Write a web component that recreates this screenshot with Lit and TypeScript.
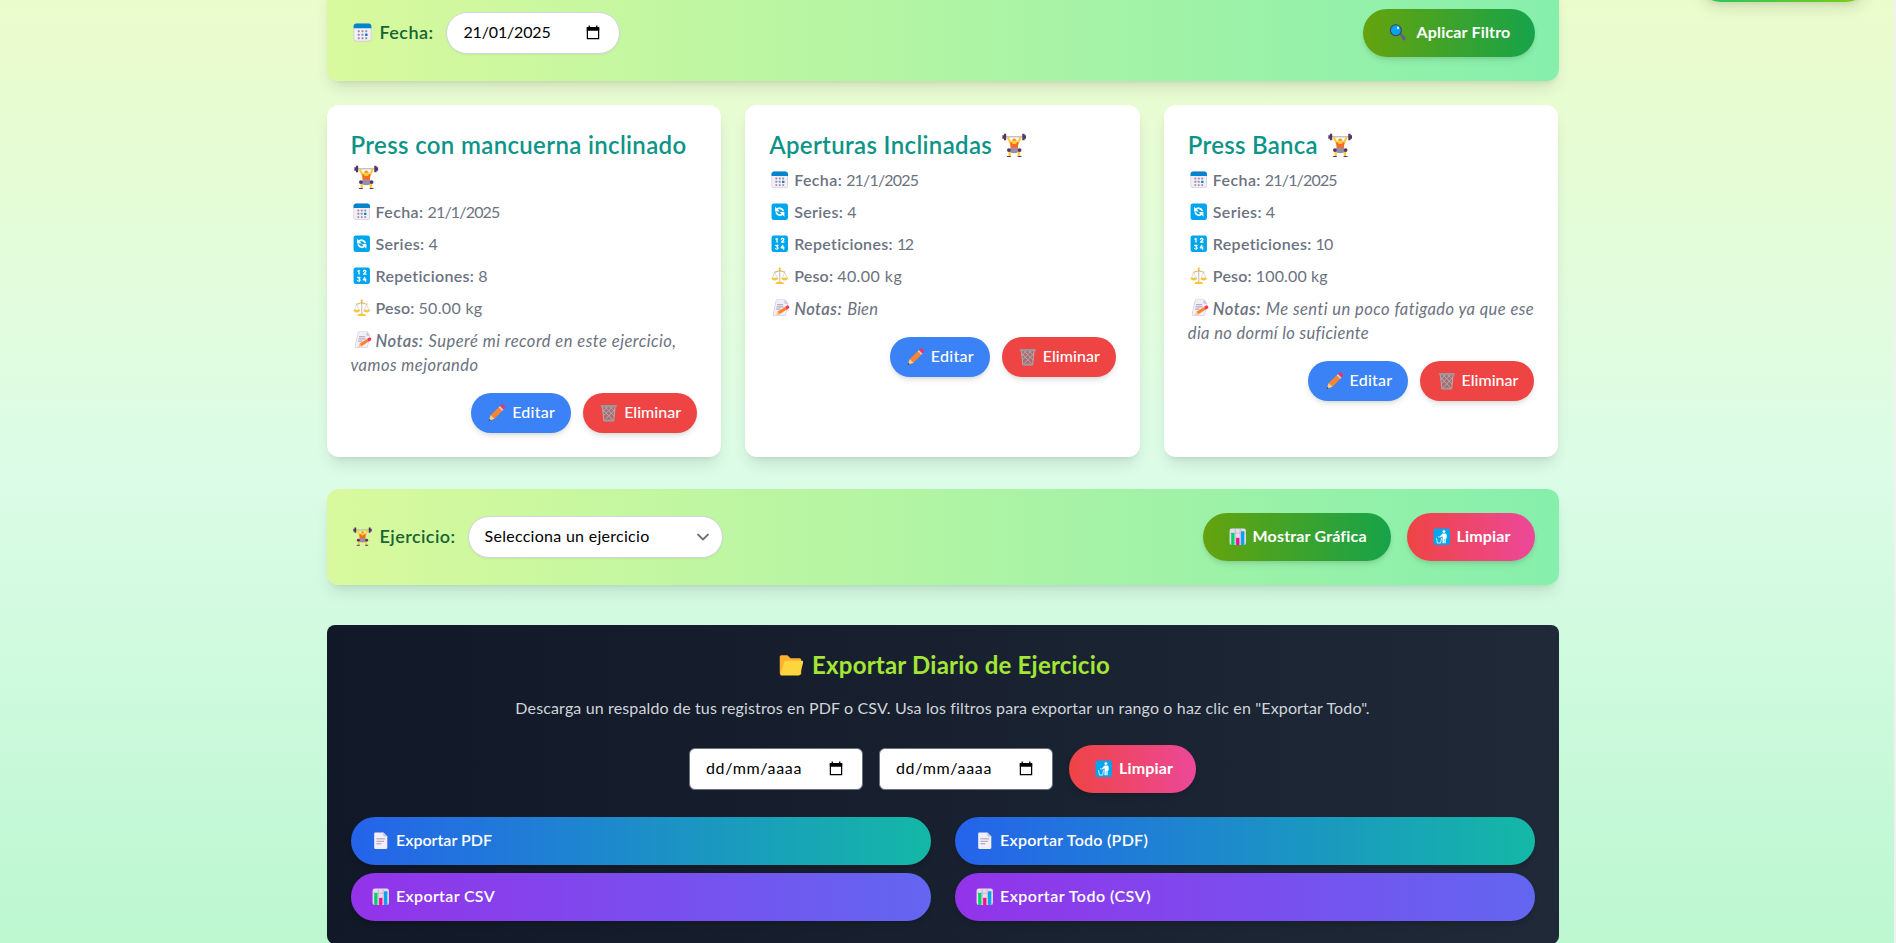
import { LitElement, html, css, svg } from "lit";
import { customElement, property } from "lit/decorators.js";
import { styleMap } from "lit/directives/style-map.js";

/* Inline text whose tracking is adjusted so that it spans a given width. */
@customElement("fit-text")
class FitText extends LitElement {
  @property({ type: Number }) w = 0;
  @property() text = "";
  @property({ attribute: false }) tracking = 0;
  static styles = css`
    :host { display: inline; white-space: pre; }
  `;
  firstUpdated() {
    const span = this.renderRoot.querySelector("span")!;
    const natural = span.getBoundingClientRect().width;
    if (this.w && natural) {
      this.tracking = (this.w - natural) / this.text.length;
      this.requestUpdate();
    }
  }
  render() {
    return html`<span style=${styleMap({ letterSpacing: this.tracking + "px" })}>${this.text}</span>`;
  }
}

const t = (text: string, w = 0) => html`<fit-text .text=${text} .w=${w}></fit-text>`;

const glyphs: Record<string, unknown> = {
  calendar: svg`
    <rect x="1" y="1" width="30" height="30" rx="5" fill="#CDC4D6"/>
    <rect x="2" y="2" width="28" height="28" rx="4" fill="#F3EEF8"/>
    <path d="M1 9V6a5 5 0 0 1 5-5h20a5 5 0 0 1 5 5v3z" fill="#0084CE"/>
    <g fill="#998EA4"><rect x="8" y="12" width="3.4" height="3.4" rx=".8"/><rect x="14.3" y="12" width="3.4" height="3.4" rx=".8"/><rect x="20.6" y="12" width="3.4" height="3.4" rx=".8"/><rect x="8" y="18" width="3.4" height="3.4" rx=".8"/><rect x="14.3" y="18" width="3.4" height="3.4" rx=".8"/><rect x="8" y="24" width="3.4" height="3.4" rx=".8"/><rect x="14.3" y="24" width="3.4" height="3.4" rx=".8"/><rect x="20.6" y="24" width="3.4" height="3.4" rx=".8"/></g>
    <rect x="20.2" y="17.6" width="4.4" height="4.4" rx=".8" fill="#0084CE"/>`,
  series: svg`
    <rect x="1" y="1" width="30" height="30" rx="4" fill="#00A6ED"/>
    <g fill="none" stroke="#fff" stroke-width="3.2"><path d="M10.5 12.2c3-4 9.500-3.600 12.300 2.500"/><path d="M21.500 19.800c-3 4-9.500 3.600-12.300-2.500"/></g>
    <path d="M7.500 7v8.500H16zM24.500 25v-8.500H16z" fill="#fff"/>`,
  reps: svg`
    <rect x="1" y="1" width="30" height="30" rx="4" fill="#00A6ED"/>
    <g fill="none" stroke="#fff" stroke-width="2.300" stroke-linecap="round" stroke-linejoin="round"><path d="M9 7.500l2-1.200V13"/><path d="M19 7.800c1-2.400 5-1.800 4.500.8-.3 1.500-3 2.700-4.300 4.400h4.700"/><path d="M8.500 19h4.300l-2.300 2.700c3 0 3.200 4-.1 4-1 0-1.800-.4-2.200-1"/><path d="M21.500 19l-2.800 4.400h5M23 21.500V26"/></g>`,
  scale: svg`
    <path d="M15 4h2v23h-2z" fill="#BEBEBE"/><path d="M6 9.500c5-.2 6-2.500 10-2.500s5 2.300 10 2.500" fill="none" stroke="#CFA53A" stroke-width="1.800"/>
    <path d="M7 10L2.500 20M7 10l4.500 10M25 10l-4.500 10M25 10l4.500 10" stroke="#BEBEBE" stroke-width="1" fill="none"/>
    <path d="M1 19.500h12c0 3.500-2.500 5-6 5s-6-1.500-6-5zM19 19.500h12c0 3.500-2.500 5-6 5s-6-1.500-6-5zM8 31c0-2.500 3-4.500 8-4.500s8 2 8 4.500z" fill="#FCC43B"/>
    <circle cx="16" cy="3" r="2" fill="#FCB62B"/>`,
  memo: svg`
    <path d="M4 3a2 2 0 0 1 2-2h15l7 7v21a2 2 0 0 1-2 2H6a2 2 0 0 1-2-2z" fill="#CDC4D6"/>
    <path d="M5 3a1 1 0 0 1 1-1h14.500l6.500 6.500V29a1 1 0 0 1-1 1H6a1 1 0 0 1-1-1z" fill="#F3EEF8"/>
    <path d="M20.500 2v5a1.500 1.500 0 0 0 1.500 1.500h5z" fill="#CDC4D6"/>
    <path d="M8 10.500h11M8 14.500h13M8 18.500h8" stroke="#998EA4" stroke-width="1.500"/>
    <path d="M12 23L25 13.500l4 5L16 28l-5 1z" fill="#FF822D"/><path d="M12 23l-2 7 6-2z" fill="#FFCE7C"/><path d="M24 14.300l3-2.300c2-1.400 6 3 3.600 5.200l-2.700 2z" fill="#F92F60"/>`,
  lifter: svg`
    <path d="M3 5h26" stroke="#998EA4" stroke-width="1.100"/>
    <path d="M8 6.500l4 8 M24 6.500l-4 8" stroke="#FFC83D" stroke-width="3" stroke-linecap="round"/>
    <path d="M2.500 1h3v8.500h-3zM26.500 1h3v8.500h-3zM.5 3h2v4.500h-2zM29.500 3h2v4.500h-2z" fill="#533566"/>
    <path d="M10.500 12.500c3.500-1.500 7.500-1.500 11 0l-1 9.500h-9z" fill="#FF6A1F"/><circle cx="16" cy="11" r="3.400" fill="#FFC83D"/><path d="M13.500 8.500a3.500 3.500 0 0 1 5 0l-1 1.500h-3z" fill="#E59B2C"/>
    <path d="M10 23.500V30M22 23.500V30" stroke="#FFC83D" stroke-width="3"/>
    <ellipse cx="16" cy="22.500" rx="6" ry="3.800" fill="#998EA4"/><circle cx="9" cy="22.300" r="2.500" fill="#533566"/><circle cx="23" cy="22.300" r="2.500" fill="#533566"/>
    <path d="M7 30h4.500v1.500H6zM20.500 30H25l1 1.500h-5.500z" fill="#533566"/>`,
  pencil: svg`
    <path d="M5 20L21 4.500l6.500 6.500L12 27z" fill="#FF822D"/><path d="M5 20l-3 8.500L3.500 30 12 27z" fill="#FFCE7C"/><path d="M2.500 27L1.500 30.500 5 29.500z" fill="#402A32"/>
    <path d="M19.500 6l2.500-2.500 6.500 6.500-2.500 2.500z" fill="#D3D3D3"/><path d="M22 3.500l1.500-1.500c2-2 4.500-.8 6 .7s2.300 3.800.6 5.500L28.500 10z" fill="#F92F60"/>`,
  trash: svg`
    <path d="M4 5h24l-3 26H7z" fill="#83838a" fill-opacity=".65"/>
    <path d="M5 10l19 20M9 5l17 17M18 5l9 9M27 10L8 30M23 5L6 22M14 5l-9 9M4.500 5L7 31h18l2.500-26" fill="none" stroke="#AFAFB2" stroke-width="1.800"/>
    <path d="M1.500 2h29v4h-29z" fill="#9A9A9E"/><path d="M7 28.500h18V31H7z" fill="#9A9A9E"/>`,
  chart: svg`
    <rect x="1" y="1" width="30" height="30" rx="4" fill="#E6DAF0"/><path d="M2 9.500h28M11.500 1v30M20.500 1v30" stroke="#B4ACBC" stroke-width="1.200"/>
    <path d="M4 9h6v22H4z" fill="#00D26A"/><path d="M13 18h6v13h-6z" fill="#F70A8D"/><path d="M22 6h6v25h-6z" fill="#00A6ED"/>`,
  litter: svg`
    <rect x="1" y="1" width="30" height="30" rx="4" fill="#00A6ED"/><circle cx="20" cy="6.500" r="2.600" fill="#fff"/>
    <path d="M17.500 10h4.500c2 0 3 1.200 3 3v6h-1.800v9h-2.400v-8h-1v8h-2.400V15l-5 3-1-1.600z" fill="#fff"/>
    <path d="M6.500 18.500L8 27.500h6l1.500-9M9 15.500l2 1" fill="none" stroke="#fff" stroke-width="1.500"/>`,
  folder: svg`
    <path d="M1 5a2 2 0 0 1 2-2h8l4 4h12a2 2 0 0 1 2 2v19H3a2 2 0 0 1-2-2z" fill="#FFB02E"/><path d="M9 10h20.500a2 2 0 0 1 2 2.600L27.500 28a2 2 0 0 1-2 1.500H3.500c-1.500 0-2-.8-1.600-2L7 11.500A2 2 0 0 1 9 10z" fill="#FCD53F"/>`,
  page: svg`
    <path d="M4 3a2 2 0 0 1 2-2h15l7 7v21a2 2 0 0 1-2 2H6a2 2 0 0 1-2-2z" fill="#F3EEF8"/><path d="M20.500 1v5.500A1.500 1.500 0 0 0 22 8h6z" fill="#CDC4D6"/>
    <path d="M8 12.500h16M8 17h14M8 21.500h9" stroke="#998EA4" stroke-width="1.500"/>`,
  search: svg`
    <path d="M19 18l3-2 7.500 8.500a3 3 0 0 1-4.500 4.500z" fill="#635994"/><circle cx="12.500" cy="11.500" r="11" fill="#533566"/><circle cx="12.500" cy="11.500" r="9" fill="#00A6ED"/><ellipse cx="16.500" cy="7" rx="2" ry="2.600" fill="#fff"/>`,
};

/* Emoji-style pictogram drawn in a fixed advance box. */
const icon = (name: string, cls = "") => html`<span class="emoji ${cls}"><svg viewBox="0 0 32 32">${glyphs[name]}</svg></span>`;

const dateIcon = html`<svg class="pick" viewBox="0 0 14 16"><path d="M1 3h12v11.500H1z" fill="none" stroke="#000" stroke-width="1.300"/><path d="M.4 2h13.200v4H.4zM2.300.5h1.400V3H2.300zM10.300.5h1.400V3h-1.400z"/></svg>`;

interface Entry { title: string; tw: number; wrap?: boolean; date: string; sets: string; reps: string; rw: number; weight: string; ww: number; notes: [string, number][]; }

const entries: Entry[] = [
  { title: "Press con mancuerna inclinado", tw: 336, wrap: true, date: "21/1/2025", sets: "4", reps: "8", rw: 10, weight: "50.00 kg", ww: 64, notes: [["Superé mi record en este ejercicio,", 248], ["vamos mejorando", 128]] },
  { title: "Aperturas Inclinadas", tw: 223, date: "21/1/2025", sets: "4", reps: "12", rw: 16, weight: "40.00 kg", ww: 65, notes: [["Bien", 31]] },
  { title: "Press Banca", tw: 130, date: "21/1/2025", sets: "4", reps: "10", rw: 17, weight: "100.00 kg", ww: 72, notes: [["Me senti un poco fatigado ya que ese", 268], ["dia no dormí lo suficiente", 181]] },
];

@customElement("app-root")
class AppRoot extends LitElement {
  static styles = css`
    :host { display: block; height: 943px; overflow: hidden; position: relative; font-family: Lato, "Open Sans", sans-serif; font-size: 16px; line-height: 24px;
      border-right: 2px solid #f1f1f1; box-sizing: border-box;
      background: linear-gradient(to bottom, #ecfccb -2%, #dcfce7 50%, #bbf7d0 101%); }
    * { box-sizing: border-box; }
    .page { width: 1232px; margin-left: 326.5px; display: flex; flex-direction: column; }
    .emoji { display: inline-flex; width: 22px; height: 16px; justify-content: center; align-items: center; vertical-align: -2px; flex: none; }
    .emoji svg { width: 17.500px; height: 17.500px; flex: none; }
    .emoji.m { width: 24px; height: 18px; } .emoji.m svg { width: 19px; height: 19px; }
    .emoji.l { width: 32px; height: 24px; vertical-align: -3px; } .emoji.l svg { width: 24.500px; height: 24.500px; }
    .emoji.it { transform: skewX(-12deg); margin-left: 1px; margin-right: -1px; }
    .panel { height: 96px; padding: 0 24px; display: flex; align-items: center; border-radius: 12px; background: linear-gradient(to right, #d9f99d, #86efac); box-shadow: 0 10px 15px -3px rgba(0,0,0,.1), 0 4px 6px -4px rgba(0,0,0,.1); }
    .panel.top { margin-top: -15px; }
    .lbl { display: flex; align-items: center; gap: 5px; font-size: 18px; font-weight: 600; color: #166534; }
    .lbl .emoji { margin-top: -1px; }
    .pill > fit-text, .btn > fit-text, .field > fit-text, .lbl > fit-text { margin-top: -2px; }
    .field { display: flex; align-items: center; justify-content: space-between; height: 42px; padding: 0 19px 0 17px; width: 174px; background: #fff; border: 1px solid #d1d5db; border-radius: 21px; box-shadow: 0 1px 2px rgba(0,0,0,.05); margin-left: 12px; color: #000; }
    .field.select { width: 255px; padding-right: 12px; padding-left: 16px; }
    .field.sq { border-color: #6b7280; border-radius: 6px; margin: 0; box-shadow: none; padding-left: 16px; }
    .pick { width: 14px; height: 15px; margin-top: -1px; }
    .chev { width: 14px; height: 10px; }
    .sp { flex: 1; }
    .pill { display: flex; align-items: center; gap: 4px; height: 48px; border-radius: 24px; padding: 0 24px; color: #fff; font-weight: 700; box-shadow: 0 4px 6px -1px rgba(0,0,0,.1), 0 2px 4px -2px rgba(0,0,0,.1); }
    .green { background: linear-gradient(to right, #65a30d, #16a34a); width: 188px; }
    .green.filter { width: 172px; gap: 8px; }
    .red { background: linear-gradient(to right, #ef4444, #ec4899); width: 128px; margin-left: 16px; }
    .cards { display: grid; grid-template-columns: repeat(3, 1fr); gap: 24px; margin: 24px 0 32px; }
    .card { height: 352px; background: #fff; border-radius: 12px; padding: 24px; box-shadow: 0 10px 15px -3px rgba(0,0,0,.1), 0 4px 6px -4px rgba(0,0,0,.1); color: #6b7280; display: flex; flex-direction: column; }
    .title { font-size: 24px; line-height: 32px; font-weight: 600; color: #0d9488; margin-bottom: 8px; white-space: nowrap; }
    .title .emoji.tail { margin-left: 6px; }
    .row { margin-bottom: 8px; height: 24px; display: flex; align-items: center; padding-bottom: 2px; }
    .row b { font-weight: 600; margin: 0 4px 0 3px; }
    .note { font-style: italic; font-size: 16.500px; white-space: nowrap; }
    .note b { font-weight: 600; margin: 0 5px 0 3px; }
    .acts { display: flex; justify-content: flex-end; gap: 12px; margin-top: 16px; }
    .btn { display: flex; align-items: center; gap: 4px; height: 40px; border-radius: 20px; padding: 0 15px; color: #fff; font-weight: 500; box-shadow: 0 4px 6px -1px rgba(0,0,0,.1), 0 2px 4px -2px rgba(0,0,0,.1); }
    .edit { background: #3b82f6; width: 100px; } .del { background: #ef4444; width: 114px; }
    .export { margin-top: 40px; height: 319px; border-radius: 8px; background: linear-gradient(to right, #111827, #1f2937); padding: 24px; }
    .h { display: flex; justify-content: center; align-items: center; gap: 5px; font-size: 24px; line-height: 32px; font-weight: 700; color: #a3e635; }
    .desc { text-align: center; color: #d1d5db; margin: 15px 0 25px; }
    .range { display: flex; justify-content: center; align-items: center; gap: 16px; margin-bottom: 24px; }
    .range .red { margin: 0; width: 127px; }
    .grid { display: grid; grid-template-columns: 1fr 1fr; column-gap: 24px; row-gap: 8px; }
    .grid .pill { padding: 0 19.500px; font-weight: 600; }
    .pdf { background: linear-gradient(to right, #2563eb, #14b8a6); }
    .csv { background: linear-gradient(to right, #9333ea, #6366f1); }
    .float { position: absolute; right: 24px; top: -46px; width: 173px; height: 48px; border-radius: 24px; background: linear-gradient(to right, #22c55e, #84cc16); box-shadow: 0 10px 15px -3px rgba(0,0,0,.1), 0 4px 6px -4px rgba(0,0,0,.1); }
  `;

  card(e: Entry) {
    return html`<article class="card">
      <div class="title">${t(e.title, e.tw)}${e.wrap ? html`<br />${icon("lifter", "l")}` : icon("lifter", "l tail")}</div>
      <div class="row">${icon("calendar")}<b>${t("Fecha:", 48)}</b>${t(e.date, 72)}</div>
      <div class="row">${icon("series")}<b>${t("Series:", 49)}</b>${t(e.sets, 10)}</div>
      <div class="row">${icon("reps")}<b>${t("Repeticiones:", 99)}</b>${t(e.reps, e.rw)}</div>
      <div class="row">${icon("scale")}<b>${t("Peso:", 39)}</b>${t(e.weight, e.ww)}</div>
      <div class="note">${icon("memo", "it")}<b>${t("Notas:", 48)}</b>${e.notes.map(([s, w], i) => html`${i ? html`<br />` : ""}${t(s, w)}`)}</div>
      <div class="acts">
        <div class="btn edit">${icon("pencil")}${t("Editar", 43)}</div>
        <div class="btn del">${icon("trash")}${t("Eliminar", 57)}</div>
      </div>
    </article>`;
  }

  render() {
    return html`
      <div class="page">
        <section class="panel top">
          <div class="lbl">${icon("calendar", "m")}${t("Fecha:", 54)}</div>
          <div class="field">${t("21/01/2025", 87)}${dateIcon}</div>
          <span class="sp"></span>
          <div class="pill green filter">${icon("search")}${t("Aplicar Filtro", 94)}</div>
        </section>
        <section class="cards">${entries.map((e) => this.card(e))}</section>
        <section class="panel">
          <div class="lbl">${icon("lifter", "m")}${t("Ejercicio:", 76)}</div>
          <div class="field select">${t("Selecciona un ejercicio", 165)}<svg class="chev" viewBox="0 0 14 10"><path d="M2 2.500l5 5 5-5" fill="none" stroke="#6b7280" stroke-width="1.800" stroke-linecap="round" stroke-linejoin="round" /></svg></div>
          <span class="sp"></span>
          <div class="pill green">${icon("chart")}${t("Mostrar Gráfica", 114)}</div>
          <div class="pill red">${icon("litter")}${t("Limpiar", 54)}</div>
        </section>
        <section class="export">
          <div class="h">${icon("folder", "l")}${t("Exportar Diario de Ejercicio", 298)}</div>
          <div class="desc">${t('Descarga un respaldo de tus registros en PDF o CSV. Usa los filtros para exportar un rango o haz clic en "Exportar Todo".', 854)}</div>
          <div class="range">
            <div class="field sq">${t("dd/mm/aaaa", 96)}${dateIcon}</div>
            <div class="field sq">${t("dd/mm/aaaa", 96)}${dateIcon}</div>
            <div class="pill red">${icon("litter")}${t("Limpiar", 54)}</div>
          </div>
          <div class="grid">
            <div class="pill pdf">${icon("page")}${t("Exportar PDF", 96)}</div>
            <div class="pill pdf">${icon("page")}${t("Exportar Todo (PDF)", 148)}</div>
            <div class="pill csv">${icon("chart")}${t("Exportar CSV", 99)}</div>
            <div class="pill csv">${icon("chart")}${t("Exportar Todo (CSV)", 151)}</div>
          </div>
        </section>
      </div>
      <div class="float"></div>
    `;
  }
}
